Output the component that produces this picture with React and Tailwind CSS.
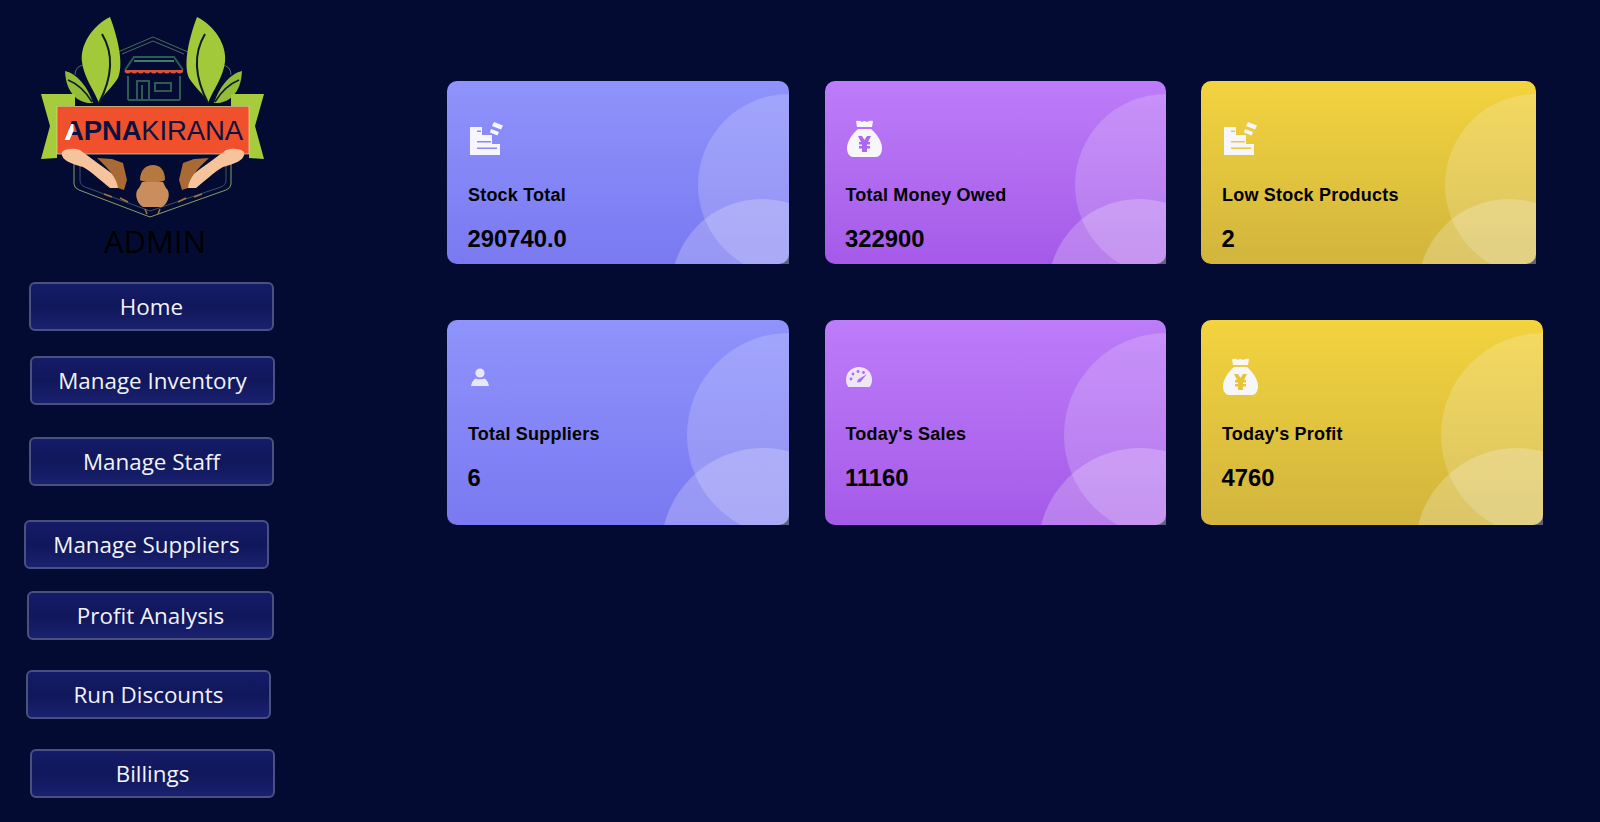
const navItems = [
  { label: "Home", box: "ml-[29px] mt-[26px]" },
  { label: "Manage Inventory", box: "ml-[30px] mt-[25px]" },
  { label: "Manage Staff", box: "ml-[29px] mt-[32px]" },
  { label: "Manage Suppliers", box: "ml-[24px] mt-[34px]" },
  { label: "Profit Analysis", box: "ml-[27px] mt-[22px] w-[247px]" },
  { label: "Run Discounts", box: "ml-[26px] mt-[30px]" },
  { label: "Billings", box: "ml-[30px] mt-[30px]" },
];

function Logo() {
  return (
    <svg viewBox="0 0 300 226" className="block w-[300px] h-[226px]">
      {/* hexagon frame */}
      <g fill="none" stroke="#4d6a5c" strokeWidth="1">
        <path d="M118 52 L153 37 L188 52" />
        <path d="M122 54 L153 41 L184 54" />
        <path d="M75 75 Q75 66 84 65" />
        <path d="M231 75 Q231 66 222 65" />
      </g>
      <path d="M74 160 V184 Q74 188 79 190 L150 217 L226 190 Q231 188 231 184 V160" fill="none" stroke="#8a9c6c" strokeWidth="1" />
      <path d="M80 160 V180 Q80 185 85 187 L150 211 L221 187 Q226 185 226 180 V160" fill="none" stroke="#3f5068" strokeWidth="1" />
      {/* shop */}
      <g fill="none" stroke="#2f5a50" strokeWidth="2">
        <path d="M128 100 V76 M180 76 V100 M128 100 H180" />
        <path d="M137 100 V81 H149 V100 M142 100 V85" />
        <path d="M155 83 H171 V91 H155 Z" />
        <path d="M125 70 L134 57 H174 L183 70" />
      </g>
      <path d="M134 61 H174" stroke="#3f7a70" strokeWidth="2" />
      <path
        d="M125 70 H183 V72 q-4 3 -6.5 0 q-3 3 -6.5 0 q-3 3 -6.5 0 q-3 3 -6.5 0 q-3 3 -6.5 0 q-3 3 -6.5 0 q-3 3 -6.5 0 q-3 3 -6.5 0 q-3 3 -6.5 0 Z"
        fill="#d9543a"
      />
      {/* leaves */}
      <path d="M110 17 C92 26 80 45 82 62 C84 78 94 90 99 103 C103 94 112 88 118 78 C124 64 118 38 110 17 Z" fill="#a2c93a" />
      <path d="M102 34 C114 54 112 78 99 103" fill="none" stroke="#0b1a2c" strokeWidth="2" />
      <path d="M197 17 C215 26 227 45 225 62 C223 78 213 90 208 103 C204 94 195 88 189 78 C183 64 189 38 197 17 Z" fill="#a2c93a" />
      <path d="M205 34 C193 54 195 78 208 103" fill="none" stroke="#0b1a2c" strokeWidth="2" />
      <path d="M65 71 C78 74 88 88 93 103 C80 104 66 95 65 71 Z" fill="#93bd37" />
      <path d="M68 80 C78 84 86 92 92 102" fill="none" stroke="#0b1a2c" strokeWidth="1.5" />
      <path d="M242 71 C229 74 219 88 214 103 C227 104 241 95 242 71 Z" fill="#93bd37" />
      <path d="M239 80 C229 84 221 92 215 102" fill="none" stroke="#0b1a2c" strokeWidth="1.5" />
      {/* ribbon */}
      <path d="M41 94 H75 V106 H57 V158 L41 159 L50 126 Z" fill="#a5cc3c" />
      <path d="M264 94 H231 V106 H249 V158 L264 159 L255 126 Z" fill="#a5cc3c" />
      <rect x="57" y="106.5" width="192" height="47.5" fill="#f1502c" stroke="#e8d98f" strokeWidth="0.7" />
      <text x="64" y="140" fontFamily="'Liberation Sans', Arial, sans-serif" fontSize="27.5" fill="#0b1240" textLength="179">
        <tspan fontWeight="700">APNA</tspan>
        <tspan>KIRANA</tspan>
      </text>
      <path d="M64.5 140 L71 124 L73.5 124 L73.5 131 L69.5 140 Z" fill="#ffffff" />
      {/* hands and pot */}
      <path d="M62 152 C66 148 74 148 80 150 C88 156 100 165 117 177 L119 188 L110 188 C100 180 92 172 83 167 C72 164 60 160 62 152 Z" fill="#f5c49c" />
      <path d="M244 152 C240 148 232 148 226 150 C218 156 206 165 189 177 L187 188 L196 188 C206 180 214 172 223 167 C234 164 246 160 244 152 Z" fill="#f5c49c" />
      <path d="M97 158 L112 159 L123 163 L127 180 L124 190 L118 188 C117 178 108 168 97 158 Z" fill="#a96a35" />
      <path d="M209 158 L194 159 L183 163 L179 180 L182 190 L188 188 C189 178 198 168 209 158 Z" fill="#a96a35" />
      <path d="M140 180 C140 170 146 165 153 165 C160 165 165 170 165 180 C162 183 143 183 140 180 Z" fill="#b5793f" />
      <path d="M142 182 H163 L166 188 C171 192 169 203 162 207 H143 C136 203 134 192 139 188 Z" fill="#c98d5e" />
      <path d="M104 194 l8 3 M120 198 l8 4 M186 198 l-8 4 M202 194 l-8 3 M145 209 l2 5 M160 209 l-2 5" stroke="#a9743f" strokeWidth="1.5" />
    </svg>
  );
}

function StockIcon() {
  return (
    <svg viewBox="0 0 33 33" className="block w-[33px] h-[33px]" fill="#f7f6ff">
      <path
        d="M0 5 H12 V13 H22 V22 H30 V33 H0 Z M7 8.5 V10 H11 V8.5 Z M7 19 V20.5 H21 V19 Z M7 25.5 V27 H27 V25.5 Z"
        fillRule="evenodd"
      />
      <path d="M24 0 L33 3.5 L31 7.5 L22 4 Z" />
      <path d="M21 7 L29 10 L27.5 13.5 L20 10.5 Z" />
    </svg>
  );
}

function BagIcon({ tint }) {
  return (
    <svg viewBox="0 0 35 37" className="block w-[35px] h-[37px]">
      <path d="M9 1 Q13 0 15 2 Q17.5 0 20 2 Q23 0 26 1 L25 7 H10 Z" fill="#f7f6fb" />
      <path d="M11 9 H24 C29 13 35 21 35 28 C35 34 32 37 29 37 H6 C3 37 0 34 0 28 C0 21 6 13 11 9 Z" fill="#f7f6fb" />
      <path d="M11 16 H15 L17.5 20 L20 16 H24 L21 22 H23 V24.5 H20 V26 H23 V28.5 H20 V32 H15 V28.5 H12 V26 H15 V24.5 H12 V22 H14 Z" fill={tint} />
    </svg>
  );
}

function UserIcon() {
  return (
    <svg viewBox="0 0 18 18" className="block w-[18px] h-[18px]" fill="#e8e7f8">
      <circle cx="9" cy="5" r="4.6" />
      <path d="M4.5 10.5 C6 11.5 12 11.5 13.5 10.5 C15.5 11.5 17 13.5 18 18 H0 C1 13.5 2.5 11.5 4.5 10.5 Z" />
    </svg>
  );
}

function GaugeIcon() {
  return (
    <svg viewBox="0 0 26 20" className="block w-[26px] h-[20px]">
      <path d="M13 0 C20.5 0 26 5.5 26 13 C26 16 25 18.5 23.5 20 H2.5 C1 18.5 0 16 0 13 C0 5.5 5.5 0 13 0 Z" fill="#eee6f7" />
      <g fill="#ad6bf0">
        <circle cx="5" cy="12" r="1.4" />
        <circle cx="7" cy="7" r="1.4" />
        <circle cx="12" cy="4.5" r="1.4" />
        <circle cx="17.5" cy="5.5" r="1.4" />
        <path d="M21 7 L14.5 15 L11 15.5 L12 12.5 Z" />
      </g>
    </svg>
  );
}

const tones = {
  blue: "bg-gradient-to-b from-[#8f93fb] to-[#7a79f1]",
  purple: "bg-gradient-to-b from-[#bd7cf9] to-[#a55ae8]",
  yellow: "bg-gradient-to-b from-[#f3d33e] to-[#d1b53d]",
};

function StatCard({ tone, title, value, icon, tall, width, iconBox }) {
  return (
    <div className={`relative overflow-hidden ${width} ${tall ? "h-[205px]" : "h-[183px]"}`}>
      <div className={`absolute inset-0 rounded-[10px] ${tones[tone]}`} />
      <span className={`absolute top-[13px] rounded-full bg-white/[0.18] ${tall ? "w-[204px] h-[204px] -right-[102px]" : "w-[182px] h-[182px] -right-[91px]"}`} />
      <span className={`absolute rounded-full bg-white/[0.22] ${tall ? "w-[204px] h-[204px] -right-[76px] -bottom-[127px]" : "w-[182px] h-[182px] -right-[64px] -bottom-[117px]"}`} />
      <div className="relative h-full pl-[21px] font-['Liberation_Sans',Arial,sans-serif] font-bold text-black">
        <div className={iconBox}>{icon}</div>
        <div className="text-[18px] leading-[22px] tracking-[0.2px] whitespace-nowrap">{title}</div>
        <div className="text-[23.8px] leading-[28px] mt-[19px] -ml-[0.5px]">{value}</div>
      </div>
    </div>
  );
}

export default function App() {
  return (
    <div className="flex w-full h-[822px] overflow-hidden bg-[#030b33]">
      <aside className="w-[300px] shrink-0">
        <Logo />
        <div className="h-[30px] pl-[104px] font-['Open_Sans',sans-serif] text-[31px] leading-[30px] text-black">ADMIN</div>
        {navItems.map((item) => (
          <button
            key={item.label}
            className={`block w-[245px] h-[49px] rounded-[6px] border-2 border-[#4a5180] bg-gradient-to-b from-[#151c68] via-[#10175a] to-[#1a216f] font-['Open_Sans',sans-serif] text-[22.4px] text-[#f1f2fa] ${item.box}`}
          >
            {item.label}
          </button>
        ))}
      </aside>
      <main className="ml-[147px] pt-[81px]">
        <div className="flex gap-[35.5px]">
          <StatCard tone="blue" title="Stock Total" value="290740.0" width="w-[342px]" iconBox="pt-[41px] pb-[29px] pl-[2px]" icon={<StockIcon />} />
          <StatCard tone="purple" title="Total Money Owed" value="322900" width="w-[341px]" iconBox="pt-[39px] pb-[27px] pl-[1px]" icon={<BagIcon tint="#ab68ef" />} />
          <StatCard tone="yellow" title="Low Stock Products" value="2" width="w-[335px]" iconBox="pt-[41px] pb-[29px] pl-[2px]" icon={<StockIcon />} />
        </div>
        <div className="flex gap-[35.5px] mt-[56px]">
          <StatCard tall tone="blue" title="Total Suppliers" value="6" width="w-[342px]" iconBox="pt-[48px] pb-[37px] pl-[3px]" icon={<UserIcon />} />
          <StatCard tall tone="purple" title="Today's Sales" value="11160" width="w-[341px]" iconBox="pt-[47px] pb-[36px]" icon={<GaugeIcon />} />
          <StatCard tall tone="yellow" title="Today's Profit" value="4760" width="w-[342px]" iconBox="pt-[38px] pb-[28px] pl-[1px]" icon={<BagIcon tint="#e6c53a" />} />
        </div>
      </main>
    </div>
  );
}
